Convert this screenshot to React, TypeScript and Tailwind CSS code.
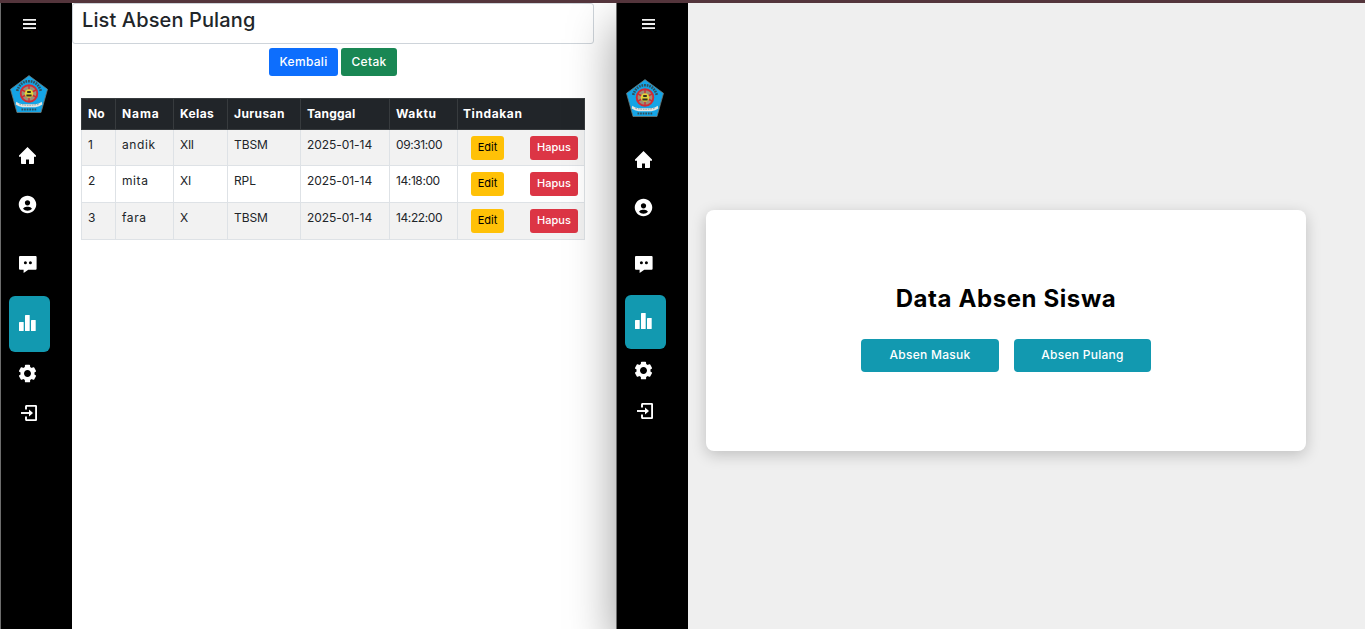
import { BiSolidCog, BiSolidUserCircle } from "react-icons/bi";

function MenuIcon() {
  return (
    <svg className="block h-[11px] w-[13px]" viewBox="0 0 13 11" fill="#f1f1f1">
      <path d="M0 0h13v1.8H0zM0 4.1h13v1.8H0zM0 8.2h13v1.8H0z" />
    </svg>
  );
}

function SchoolLogo() {
  return (
    <svg className="block size-[38px]" viewBox="0 0 38 38">
      <path d="M19 .6 37.5 14.3 31 37.5H7L.5 14.3Z" fill="#14a4e6" stroke="#6f7773" strokeWidth=".8" />
      <path d="M7.2 16C9 10 13 6.2 19 6.2S29 10 30.8 16" fill="none" stroke="#31505c" strokeWidth="2.6" strokeDasharray="1.7 .9" />
      <circle cx="19" cy="18.5" r="8.3" fill="#9c8f78" stroke="#d02c35" strokeWidth="1.9" />
      <path d="M19 10v17M11 14.5l16 8M27 14.5l-16 8" stroke="#d02c35" strokeWidth="1.4" />
      <circle cx="19" cy="18.5" r="4.3" fill="#e4d33c" />
      <path d="M17.2 16h3.6v2h-3.6zM16.4 19.5h5.2v2h-5.2z" fill="#33331f" />
      <path d="M6.3 26.7q2.5 2.3 6.5 2.6h12.4q4-.3 6.5-2.6l.6 2.8q-2.8 2.4-7 2.7H12.7q-4.2-.3-7-2.7Z" fill="#e3e6e3" />
      <path d="M9.5 29.4q9 1.8 19 0" fill="none" stroke="#8e9997" strokeWidth="1" strokeDasharray="1.5 1" />
      <path d="M11.5 34.6h15" stroke="#31505c" strokeWidth="2" strokeDasharray="1.7 .9" />
    </svg>
  );
}

function HomeIcon() {
  return (
    <svg className="block size-[17px]" viewBox="0 0 17 17" fill="white">
      <path d="M8.5 0 17 8.6v1.2h-2v6.4a.8.8 0 0 1-.8.8H10v-4.500H7V17H2.800a.8.8 0 0 1-.8-.8V9.800H0V8.600Z" />
    </svg>
  );
}

function ChatIcon() {
  return (
    <svg className="block h-[17px] w-[18px]" viewBox="0 0 18 17">
      <path d="M1 0h15.6q1 0 1 1v11.700q0 1-1 1H9.300L4.600 17v-3.300H1q-1 0-1-1V1q0-1 1-1Z" fill="white" />
      <circle cx="6.400" cy="6.700" r="1.500" />
      <circle cx="11.400" cy="6.700" r="1.500" />
    </svg>
  );
}

function ChartIcon() {
  return (
    <svg className="block h-4 w-[17px]" viewBox="0 0 17 16" fill="white">
      <rect y="7" width="4.700" height="9" rx=".6" />
      <rect x="6" width="4.700" height="16" rx=".6" />
      <rect x="12" y="5" width="4.700" height="11" rx=".6" />
    </svg>
  );
}

function ExitIcon() {
  return (
    <svg className="block size-4" viewBox="0 0 16 16" fill="none" stroke="white" strokeWidth="1.900">
      <path d="M5 4.500V1.600q0-.7.7-.7h8.700q.7 0 .7.700v12.800q0 .7-.7.700H5.700q-.7 0-.7-.7v-2.900" />
      <path d="M0 8h10" />
      <path d="m8 4.500 4 3.500-4 3.500Z" fill="white" stroke="none" />
    </svg>
  );
}

type Spacing = {
  logo: string;
  home: string;
  user: string;
  chat: string;
  chart: string;
  cog: string;
  exit: string;
  menu: string;
};

const leftSpacing: Spacing = {
  menu: "ml-[22px]",
  logo: "mt-[45px]",
  home: "mt-[34px]",
  user: "mt-[30px]",
  chat: "mt-[41px]",
  chart: "mt-[23px] h-14 pt-[19px]",
  cog: "mt-[11px]",
  exit: "mt-[21px]",
};

const rightSpacing: Spacing = {
  menu: "ml-[25px]",
  logo: "mt-[49px]",
  home: "mt-[34px]",
  user: "mt-[29px]",
  chat: "mt-[38px]",
  chart: "mt-[22px] h-[54px] pt-[18px]",
  cog: "mt-[11px]",
  exit: "mt-[22px]",
};

function Sidebar({ spacing }: { spacing: Spacing }) {
  return (
    <nav className="flex w-[72px] shrink-0 flex-col items-start border-l border-[#6d6d6d] bg-black pt-4 text-white">
      <div className={spacing.menu}>
        <MenuIcon />
      </div>
      <div className={`ml-[9px] ${spacing.logo}`}>
        <SchoolLogo />
      </div>
      <div className={`ml-[18px] ${spacing.home}`}>
        <HomeIcon />
      </div>
      <div className={`ml-4 ${spacing.user}`}>
        <BiSolidUserCircle className="block size-[21px]" />
      </div>
      <div className={`ml-[18px] ${spacing.chat}`}>
        <ChatIcon />
      </div>
      <div className={`ml-2 w-[41px] rounded-md bg-[#1299b0] pl-[10px] ${spacing.chart}`}>
        <ChartIcon />
      </div>
      <div className={`ml-4 ${spacing.cog}`}>
        <BiSolidCog className="block size-[21px]" />
      </div>
      <div className={`ml-[19.500px] ${spacing.exit}`}>
        <ExitIcon />
      </div>
    </nav>
  );
}

const rows = [
  { no: "1", name: "andik", grade: "XII", major: "TBSM", date: "2025-01-14", time: "09:31:00", look: "h-9 bg-[#f2f2f2]" },
  { no: "2", name: "mita", grade: "XI", major: "RPL", date: "2025-01-14", time: "14:18:00", look: "h-[37px] bg-white" },
  { no: "3", name: "fara", grade: "X", major: "TBSM", date: "2025-01-14", time: "14:22:00", look: "h-[37px] bg-[#f2f2f2]" },
];

const cell = "border-r border-[#dee2e6] pl-1.5 pt-[5px]";
const head = "border-r border-[#373b3e] pl-1.5 pt-[5px]";
const columns = "grid grid-cols-[34px_58px_54px_73px_89px_68px_127px]";

function AttendanceTable() {
  return (
    <div role="table" className="ml-[9px] mt-[22px] w-[504px] whitespace-nowrap text-[12px] leading-5 text-[#212529]">
      <div role="row" className={`${columns} h-8 border-y border-l border-[#373b3e] bg-[#212529] font-bold text-white`}>
        <div className={`${head} tracking-[0.2px]`}>No</div>
        <div className={`${head} tracking-[0.9px]`}>Nama</div>
        <div className={`${head} tracking-[0.4px]`}>Kelas</div>
        <div className={`${head} tracking-[0.4px]`}>Jurusan</div>
        <div className={`${head} tracking-[0.2px]`}>Tanggal</div>
        <div className={`${head} tracking-[0.6px]`}>Waktu</div>
        <div className="border-r border-[#373b3e] pl-[5px] pt-[5px] tracking-[0.6px]">Tindakan</div>
      </div>
      {rows.map((r) => (
        <div role="row" key={r.no} className={`${columns} border-b border-l border-[#dee2e6] ${r.look}`}>
          <div className={cell}>{r.no}</div>
          <div className={`${cell} tracking-[0.6px]`}>{r.name}</div>
          <div className={`${cell} tracking-[-0.3px]`}>{r.grade}</div>
          <div className={`${cell} tracking-[-0.1px]`}>{r.major}</div>
          <div className={`${cell} tracking-[-0.05px]`}>{r.date}</div>
          <div className={`${cell} tracking-[-0.4px]`}>{r.time}</div>
          <div className="flex items-start justify-between border-r border-[#dee2e6] pl-[13px] pr-1.5 pt-1.5 text-[11px] leading-[23px]">
            <button className="h-[23.500px] w-[33px] rounded-[3px] bg-[#ffc107] text-black">Edit</button>
            <button className="h-[23.500px] w-12 rounded-[3px] bg-[#dc3545] font-medium text-white">Hapus</button>
          </div>
        </div>
      ))}
    </div>
  );
}

export default function App() {
  return (
    <div className="flex h-[629px] w-[1365px] flex-col overflow-hidden bg-white font-['Inter',sans-serif]">
      <div className="h-[3px] shrink-0 bg-[#54353c]" />
      <div className="flex min-h-0 flex-1 overflow-hidden">
        <Sidebar spacing={leftSpacing} />
        <main className="w-[544px] shrink-0 bg-white">
          <h1 className="h-[41px] w-[522px] rounded-[3px] border border-[#ced4da] pl-[9px] text-[20px] font-medium leading-8 tracking-[0.12px] text-[#212529]">
            List Absen Pulang
          </h1>
          <div className="mt-1 flex justify-center gap-[3px] pr-[22px] text-[12px] font-medium tracking-[0.3px] text-white">
            <button className="h-[28px] w-[69px] rounded-[3px] bg-[#0d6efd]">Kembali</button>
            <button className="h-[28px] w-14 rounded-[3px] bg-[#198754]">Cetak</button>
          </div>
          <AttendanceTable />
        </main>
        <div className="relative flex flex-1 bg-[#efefef] shadow-[0_20px_45px_rgba(0,0,0,0.400)]">
          <Sidebar spacing={rightSpacing} />
          <main className="flex-1 pl-[18px] pt-[207px]">
            <section className="flex h-[241px] w-[600px] flex-col items-center rounded-lg bg-white pt-[71px] shadow-[0_4px_15px_rgba(0,0,0,0.200)]">
              <h2 className="whitespace-nowrap text-[24px] font-bold leading-9 tracking-[0.6px] text-black">Data Absen Siswa</h2>
              <div className="mt-[22px] flex gap-[15px] text-[12px] font-medium tracking-[0.25px] text-white">
                <button className="h-[33px] w-[138px] rounded bg-[#1299b0] pb-0.5">Absen Masuk</button>
                <button className="h-[33px] w-[137px] rounded bg-[#1299b0] pb-0.5">Absen Pulang</button>
              </div>
            </section>
          </main>
        </div>
      </div>
    </div>
  );
}
